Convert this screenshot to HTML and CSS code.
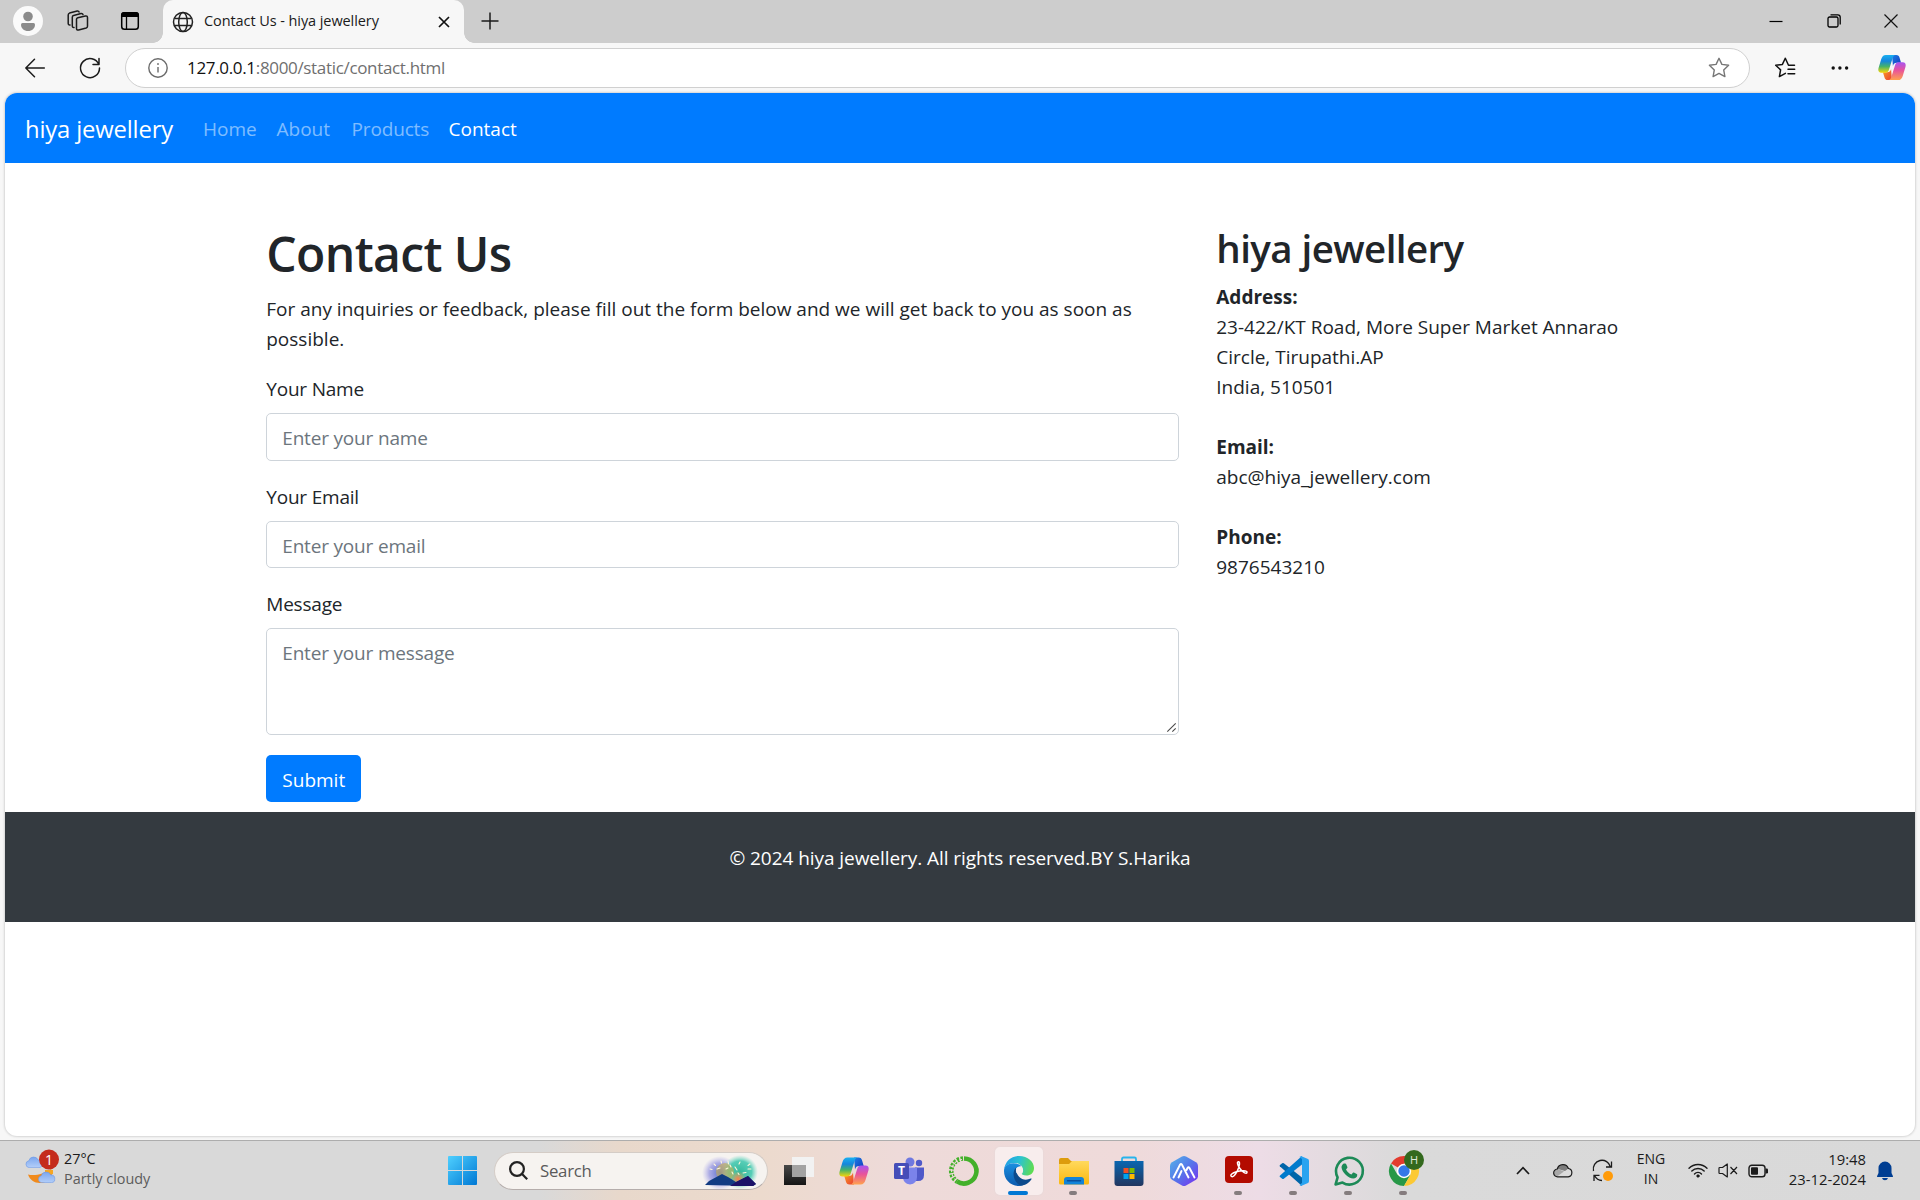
FILE: index.html
```html
<!DOCTYPE html>
<html lang="en">
<head>
<meta charset="utf-8">
<title>Contact Us - hiya jewellery</title>
<link rel="stylesheet" href="styles.css">
</head>
<body>
<svg class="defs" width="0" height="0" aria-hidden="true">
  <defs>
    <linearGradient id="cpA" x1="0" y1="0" x2="0" y2="1"><stop offset="0" stop-color="#19b0f0"/><stop offset=".35" stop-color="#1586dd"/><stop offset=".65" stop-color="#45b26a"/><stop offset="1" stop-color="#f5d60a"/></linearGradient>
    <linearGradient id="cpB" x1="0" y1="0" x2="0" y2="1"><stop offset="0" stop-color="#a855f0"/><stop offset=".45" stop-color="#e8539b"/><stop offset="1" stop-color="#ffa24d"/></linearGradient>
    <linearGradient id="cpC" x1="0" y1="0" x2="1" y2="1"><stop offset="0" stop-color="#1a7fe8"/><stop offset="1" stop-color="#1638b8"/></linearGradient>
    <linearGradient id="cpD" x1="0" y1="0" x2="1" y2="1"><stop offset="0" stop-color="#f9a227"/><stop offset="1" stop-color="#ea3d2f"/></linearGradient>
    <symbol id="copilot" viewBox="0 0 30 28">
      <path d="M15 .5h4.500c2.300 0 3 1 3.600 3l1.600 5.500h-4.500c-2.500 0-3.500 1-4.200 3.500z" fill="url(#cpC)"/>
      <path d="M15 27.500h-4.500c-2.300 0-3-1-3.600-3L5.300 19h4.500c2.500 0 3.500-1 4.200-3.500z" fill="url(#cpD)"/>
      <path d="M8.500.5H19c-2 0-2.800 1.500-3.400 3.500L12 15.500c-.8 2.800-1.700 4-4.200 4H3.500C.7 19.500-.2 17.500.6 14.500L3.500 5C4.400 2.200 5.800.5 8.500.5z" fill="url(#cpA)"/>
      <path d="M21.500 27.500H11c2 0 2.800-1.500 3.400-3.500L18 12.500c.8-2.800 1.700-4 4.200-4h4.300c2.800 0 3.700 2 2.900 5L26.500 23c-.9 2.800-2.300 4.500-5 4.500z" fill="url(#cpB)"/>
    </symbol>
    <linearGradient id="cloudG" x1="0" y1="0" x2="0" y2="1"><stop offset="0" stop-color="#7ba6ee"/><stop offset="1" stop-color="#b3cef9"/></linearGradient>
    <symbol id="cloudlet" viewBox="0 0 18 12"><path d="M4 11.600A3.500 3.500 0 0 1 3.800 4.700 5 5 0 0 1 13.200 4 3.800 3.800 0 0 1 14 11.600z" fill="url(#cloudG)" stroke="#6b98e6" stroke-width=".6"/></symbol>
  </defs>
</svg>

<header class="tabstrip">
  <div class="strip-tools">
    <svg width="30" height="30" viewBox="0 0 30 30"><circle cx="15" cy="15" r="15" fill="#fafafa"/><circle cx="15" cy="10.500" r="4.800" fill="#8b8b8b"/><path d="M8 18.500q0-1.500 1.500-1.500h11q1.500 0 1.500 1.500c0 4-3 6.500-7 6.500s-7-2.500-7-6.500z" fill="#8b8b8b"/></svg>
    <svg width="22" height="22" viewBox="0 0 22 22" fill="none" stroke="#1b1b1b" stroke-width="1.500" stroke-linejoin="round" stroke-linecap="round"><path d="M9.500 9.200q.2-1.200 1.300-1.500l7.500-1.700q2-.3 2.200 1.500v8.700q0 1.400-1.300 1.800l-7.600 2q-2 .4-2.100-1.500z"/><path d="M7 17.500q-1.600.2-1.700-1.500V7.200q0-1.500 1.300-1.800L14 3.600q1.600-.2 2 1"/><path d="M3 15q-1.700.2-1.800-1.500V5q0-1.500 1.300-1.900l7.700-2q1.400-.3 1.900 1"/></svg>
    <svg width="20" height="20" viewBox="0 0 20 20"><rect x="1.700" y="1.700" width="16.600" height="16.600" rx="2.800" fill="none" stroke="#000" stroke-width="1.500"/><path d="M1 6V4q0-3 3-3h12q3 0 3 3v2z"/><path d="M6.500 6v12" stroke="#000" stroke-width="1.300"/></svg>
  </div>
  <div class="tab">
    <svg width="22" height="22" viewBox="0 0 22 22" fill="none" stroke="#222" stroke-width="1.500"><circle cx="11" cy="11" r="9.500"/><ellipse cx="11" cy="11" rx="4.300" ry="9.500"/><path d="M2.500 7.500h17M2.500 14.500h17"/></svg>
    <span class="tab-title">Contact Us - hiya jewellery</span>
    <svg class="tab-close" width="12" height="12" viewBox="0 0 12 12" stroke="#111" stroke-width="1.700"><path d="M1 1l10 10M11 1L1 11"/></svg>
  </div>
  <svg class="newtab" width="18" height="18" viewBox="0 0 18 18" stroke="#1b1b1b" stroke-width="1.500"><path d="M9 .5v17M.5 9h17"/></svg>
  <div class="window-buttons">
    <svg width="14" height="14" viewBox="0 0 14 14" stroke="#000" stroke-width="1.200"><path d="M.5 7.500h13"/></svg>
    <svg width="14" height="14" viewBox="0 0 14 14" fill="none" stroke="#000" stroke-width="1.300"><rect x="1" y="3" width="10" height="10" rx="1.500"/><path d="M3.500 .8h7.300q2.400 0 2.400 2.400v7.300"/></svg>
    <svg width="14" height="14" viewBox="0 0 14 14" stroke="#111" stroke-width="1.200"><path d="M.5.5l13 13M13.500.5l-13 13"/></svg>
  </div>
</header>

<div class="toolbar">
  <svg class="back" width="20" height="20" viewBox="0 0 20 20" fill="none" stroke="#1b1b1b" stroke-width="1.500" stroke-linecap="round" stroke-linejoin="round"><path d="M19.300 10H.8M9.500 1.300L.8 10l8.700 8.700"/></svg>
  <svg class="reload" width="22" height="22" viewBox="0 0 22 22" fill="none" stroke="#1b1b1b" stroke-width="1.500" stroke-linecap="round" stroke-linejoin="round"><path d="M19.800 7.500A9.500 9.500 0 1 0 20.500 11M20 1.500v6h-6"/></svg>
  <div class="address">
    <svg width="20" height="20" viewBox="0 0 20 20" fill="none" stroke="#6b6b6b" stroke-width="1.400"><circle cx="10" cy="10" r="9.200"/><path d="M10 9v5.500"/><circle cx="10" cy="6" r=".6" fill="#6b6b6b" stroke-width=".8"/></svg>
    <span class="url"><b>127.0.0.1</b>:8000/static/contact.html</span>
    <svg class="star" width="22" height="21" viewBox="0 0 22 21" fill="none" stroke="#767676" stroke-width="1.400" stroke-linejoin="round"><path d="M11 1.300l2.900 6.100 6.700.9-4.900 4.600 1.200 6.700-5.900-3.200-5.900 3.200 1.200-6.700L1.400 8.300l6.700-.9z"/></svg>
  </div>
  <svg class="fav" width="22" height="21" viewBox="0 0 22 21" fill="none" stroke="#111" stroke-width="1.500" stroke-linejoin="round" stroke-linecap="round"><path d="M20.500 8.300h-6L11.300 1.300 8.400 7.400l-6.700.9 4.900 4.600-1.200 6.700 6-3.300M14 12.300h6.700M14 16.700h6.700"/></svg>
  <svg class="dots" width="18" height="6" viewBox="0 0 18 6" fill="#111"><circle cx="2.200" cy="3" r="1.700"/><circle cx="8.900" cy="3" r="1.700"/><circle cx="15.600" cy="3" r="1.700"/></svg>
  <svg class="cp" width="28" height="27"><use href="#copilot"/></svg>
</div>

<div class="viewport">
  <nav class="navbar">
    <a class="brand">hiya jewellery</a>
    <a class="nav-link home">Home</a>
    <a class="nav-link about">About</a>
    <a class="nav-link products">Products</a>
    <a class="nav-link active">Contact</a>
  </nav>
  <main class="container">
    <section class="col-form">
      <h1>Contact Us</h1>
      <p>For any inquiries or feedback, please fill out the form below and we will get back to you as soon as<br>possible.</p>
      <form>
        <div class="group"><label for="name">Your Name</label><input id="name" type="text" placeholder="Enter your name"></div>
        <div class="group"><label for="email">Your Email</label><input id="email" type="text" placeholder="Enter your email"></div>
        <div class="group"><label for="message">Message</label><textarea id="message" placeholder="Enter your message"></textarea>
          <svg class="grip" width="9" height="9" viewBox="0 0 9 9" stroke="#4a4a4a" stroke-width="1.100"><path d="M.3 8.700L8.700.3M5.300 8.700l3.400-3.400"/></svg></div>
        <button type="button" class="submit">Submit</button>
      </form>
    </section>
    <aside class="col-info">
      <h2>hiya jewellery</h2>
      <p><strong>Address:</strong><br>23-422/KT Road, More Super Market Annarao<br>Circle, Tirupathi.AP<br>India, 510501<br><br><strong>Email:</strong><br>abc@hiya_jewellery.com<br><br><strong>Phone:</strong><br>9876543210</p>
    </aside>
  </main>
  <footer class="footer"><p>© 2024 hiya jewellery. All rights reserved.BY S.Harika</p></footer>
</div>

<div class="taskbar">
  <div class="weather">
    <svg width="36" height="38" viewBox="0 0 36 38">
      <path d="M3 24.500c6 1.500 16 0 23-5.500 3 5-.5 14-11 14C9 33 5 30 3 24.500z" fill="#f08a1c"/><path d="M20 20h8v4h-8z" fill="#f6a623"/>
      <use href="#cloudlet" x="0" y="6" width="18" height="12"/><use href="#cloudlet" x="12.500" y="21" width="18" height="12"/>
      <circle cx="24" cy="9.500" r="10" fill="#c42b1c"/><text x="24" y="14.500" text-anchor="middle" font-size="14" fill="#fff">1</text>
    </svg>
    <div class="two"><span>27°C</span><span class="dim">Partly cloudy</span></div>
  </div>
  <div class="start">
    <svg width="29" height="29" viewBox="0 0 29 29"><defs><linearGradient id="win" x1="0" y1="0" x2="1" y2="1" ><stop offset="0" stop-color="#4fd0ff"/><stop offset="1" stop-color="#0078d4"/></linearGradient></defs><path d="M0 1q0-1 1-1h13v14H0zM15 0h13q1 0 1 1v13H15zM0 15h14v14H1q-1 0-1-1zM15 15h14v13q0 1-1 1H15z" fill="url(#win)"/></svg>
  </div>
  <div class="search">
    <svg width="19" height="19" viewBox="0 0 19 19" fill="none" stroke="#222" stroke-width="2.200"><circle cx="8" cy="8" r="6.900"/><path d="M12.800 12.800l5.400 5.400"/></svg>
    <span>Search</span>
    <svg class="fireworks" width="56" height="32" viewBox="0 0 56 32"><defs><radialGradient id="fwA"><stop offset="0" stop-color="#5b6fd0"/><stop offset=".6" stop-color="#9a9ae2" stop-opacity=".8"/><stop offset="1" stop-color="#b9b4ec" stop-opacity="0"/></radialGradient><radialGradient id="fwB"><stop offset="0" stop-color="#36b89c"/><stop offset=".65" stop-color="#45c9b0" stop-opacity=".9"/><stop offset="1" stop-color="#7fdcc8" stop-opacity="0"/></radialGradient><radialGradient id="fwC"><stop offset="0" stop-color="#ff7a50"/><stop offset="1" stop-color="#f0b040" stop-opacity="0"/></radialGradient></defs>
      <ellipse cx="18" cy="18" rx="18" ry="17" fill="url(#fwA)"/><ellipse cx="38" cy="17" rx="18" ry="17" fill="url(#fwB)"/><ellipse cx="23" cy="17" rx="9" ry="9" fill="#c9b04e" opacity=".6"/><circle cx="36" cy="24" r="8" fill="url(#fwC)"/>
      <g stroke="#fff7dc" stroke-width="1.100" stroke-linecap="round"><path d="M8 14l2 .5M12 9l1.500 1.500M19 6l.5 2M26 6l.5 3M38 7l-1 2M48 9l-2 1.500M49 14h-3M28 10l1 2M33 12l2 3M24 14l2-1M30 17l1 2M41 18l3-.5M15 14l3-1M36 18l1 1.500"/></g>
      <path d="M3 30l4-4 13-7 6 3 8 5 12-6 8 8-3 2z" fill="#123c82"/><path d="M28 31l6-4 12-6 8 8-3 2z" fill="#1d1268"/></svg>
  </div>
  <div class="apps">
    <div class="app"><svg width="30" height="30" viewBox="0 0 30 30"><defs><linearGradient id="tv" x1="0" y1="0" x2="0" y2="1"><stop offset="0" stop-color="#484848"/><stop offset="1" stop-color="#151515"/></linearGradient></defs><path d="M0 9h22v20H0z" fill="url(#tv)"/><path d="M8 1h22v20H8z" fill="#f2f2f2"/><path d="M8 9h14v12H8z" fill="#a3a3a3"/></svg></div>
    <div class="app"><svg width="30" height="28"><use href="#copilot"/></svg></div>
    <div class="app"><svg width="30" height="30" viewBox="0 0 30 30"><circle cx="16" cy="6" r="4.500" fill="#6f78e0"/><circle cx="25" cy="7" r="3.200" fill="#5059c9"/><path d="M21 11.500h9V19q0 6-6 6h-3z" fill="#5059c9"/><path d="M9 11.500h14V21q0 6.500-7 7.500-7-1-7-7.500z" fill="#7b83eb"/><rect y="7" width="15" height="16" rx="1.500" fill="#454db8"/><text x="7.500" y="19.300" text-anchor="middle" font-size="12" font-weight="700" fill="#fff">T</text></svg></div>
    <div class="app"><svg width="30" height="30" viewBox="0 0 30 30" fill="none" stroke="#43b02a"><path d="M15 2.500a12.500 12.500 0 1 1-7 22.900" stroke-width="4.600"/><path d="M14 2.500A12.500 12.500 0 0 0 8 25.500" stroke-width="4.600" stroke-dasharray="2.400 1.300"/><path d="M13 3.500A11.500 11.500 0 0 0 7 24" stroke="#f0dcdc" stroke-width="1.100" stroke-dasharray="3 2"/></svg></div>
    <div class="app current"><svg width="30" height="30" viewBox="0 0 30 30"><defs><linearGradient id="eA" x1="0" y1=".3" x2="1" y2=".5"><stop offset="0" stop-color="#1e9be8"/><stop offset=".5" stop-color="#2cc3d0"/><stop offset="1" stop-color="#5fdc50"/></linearGradient><linearGradient id="eB" x1="0" y1="0" x2="0" y2="1"><stop offset="0" stop-color="#1b8fe0"/><stop offset="1" stop-color="#0b5aae"/></linearGradient></defs>
      <path d="M0 14C1 5.500 7 0 15 0c9 0 15 6 15 12 0 5-3.500 7.500-7.500 7.500-3.500 0-5-1.200-5-2.200 0-.8 1.300-1.600 1.300-4C18.800 10 15 7 10.500 7 5 7 1 10 0 14z" fill="url(#eA)"/><path d="M0 15C0 10.500 4 7.300 9.500 7.300c3.500 0 6.200 1.200 8 3-3.500-.8-6.500 2-6.500 6.200 0 6 4.500 10.500 12 10C20.500 28.800 18 30 15 30 6.500 30 0 23.500 0 15z" fill="url(#eB)"/><path d="M12 11.800C8 15 8.500 25 16 29.500c5 .3 9-2.500 11.500-6.300.3-.7-.2-1-.8-.7-6 3-14.500.5-14.700-10.700z" fill="#0c4a8c"/><circle cx="15.500" cy="14.700" r="3.600" fill="#f7ecec"/></svg></div>
    <div class="app run"><svg width="30" height="30" viewBox="0 0 30 30"><defs><linearGradient id="fold" x1="0" y1="0" x2="0" y2="1"><stop offset="0" stop-color="#ffd95e"/><stop offset="1" stop-color="#fbb80e"/></linearGradient></defs><path d="M0 4q0-2 2-2h7l3 3h16q2 0 2 2v4H0z" fill="#dd9c0d"/><path d="M0 8h10l3-3h17v22q0 1.500-1.500 1.500h-27Q0 28.500 0 27z" fill="url(#fold)"/><path d="M5 28.500V24q0-3 3-3h14q3 0 3 3v4.500z" fill="#1283d8"/><path d="M8.500 24.700h13" stroke="#0b4f9b" stroke-width="1.400" stroke-linecap="round"/></svg></div>
    <div class="app"><svg width="30" height="30" viewBox="0 0 30 30"><defs><linearGradient id="store" x1="0" y1="0" x2="0" y2="1"><stop offset="0" stop-color="#0a66b0"/><stop offset="1" stop-color="#22365f"/></linearGradient></defs><path d="M8 6V3q0-1.500 1.500-1.500h11Q22 1.500 22 3v3" fill="none" stroke="#28b4ec" stroke-width="1.800"/><path d="M.5 5h29v22q0 3-3 3h-23q-3 0-3-3z" fill="url(#store)"/><path d="M9.500 12h5v5h-5z" fill="#f25022"/><path d="M15.500 12h5v5h-5z" fill="#7fba00"/><path d="M9.500 18h5v5h-5z" fill="#00a4ef"/><path d="M15.500 18h5v5h-5z" fill="#ffb900"/></svg></div>
    <div class="app"><svg width="30" height="30" viewBox="0 0 30 30"><defs><linearGradient id="hex" x1="0" y1="0" x2="1" y2="1"><stop offset="0" stop-color="#55b4e8"/><stop offset=".5" stop-color="#5576ea"/><stop offset="1" stop-color="#7a2cf0"/></linearGradient></defs><path d="M13 .5q2-1 4 0l10 5.800q2 1.200 2 3.400v10.600q0 2.200-2 3.400L17 29.500q-2 1-4 0L3 23.700q-2-1.200-2-3.400V9.700q0-2.200 2-3.400z" fill="url(#hex)"/><path d="M4.500 21.500L11 8.700q1-1.700 2 0l6.500 12.800M12.500 15l-3 6.500M17.500 14l1-2q1-1.500 2 0l5 9.500" fill="none" stroke="#fff" stroke-width="1.900" stroke-linecap="round" stroke-linejoin="round"/></svg></div>
    <div class="app run"><svg width="30" height="30" viewBox="0 0 30 30"><rect x="1" y="0" width="28" height="27" rx="4" fill="#b30b00"/><path d="M7.500 20.500c-2-1.500 1-3.500 5-4.700 5-1.600 10.500-1.300 10.500.5 0 2.500-5-.3-7.500-4.300-2-3.300-2.700-6-1.200-6.300 2-.3 1.300 4.300-.8 8.800-2 4.300-4.500 7-6 6z" fill="none" stroke="#fff" stroke-width="1.500"/></svg></div>
    <div class="app run"><svg width="30" height="30" viewBox="0 0 30 30"><path d="M1 9l2.200-1.800q.8-.5 1.600.1L23 21.500V30L.8 10.300Q.3 9.600 1 9z" fill="#0065a9"/><path d="M1 21l2.200 1.800q.8.500 1.600-.1L23 8.500V0L.8 19.700q-.5.700.2 1.300z" fill="#007acc"/><path d="M22 30q-1-.3-1.500-1L23 27V3l-2.500-2q.7-.9 2-.8L29 3q1 .5 1 2v20q0 1.500-1 2z" fill="#29a3f0"/></svg></div>
    <div class="app run"><svg width="30" height="30" viewBox="0 0 30 30"><path d="M1.600 28.400l2-7A13.400 13.400 0 1 1 8.500 26.600z" fill="none" stroke="#1d8a57" stroke-width="2.600" stroke-linejoin="round"/><path d="M9.800 7.500h1.400q.7 0 1 .7l1.200 2.900q.2.500-.2 1l-1.200 1.500c1.400 2.500 3 4 5.400 5l1.500-1.800q.4-.5 1-.2l2.800 1.300q.6.300.6.900c0 2.500-2 3.700-4 3.700-5 0-11.300-6-11.800-11.200 0-1.700 1.300-3.300 2.300-3.800z" fill="#1d8a57"/></svg></div>
    <div class="app run"><svg width="30" height="30" viewBox="0 0 30 30"><path d="M15 15L2 7.500A15 15 0 0 1 28 7.500H15z" fill="#e33b2e"/><path d="M15 15l6.500 3.700L15 30A15 15 0 0 1 2 7.500l6.500 11.200z" fill="#279847"/><path d="M15 7.500h13A15 15 0 0 1 15 30l6.500-11.300z" fill="#fcc934"/><circle cx="15" cy="15" r="7.200" fill="#fff"/><circle cx="15" cy="15" r="5.700" fill="#3478e8"/></svg><span class="badge">H</span></div>
  </div>
  <div class="tray">
    <svg class="caret" width="14" height="9" viewBox="0 0 14 9" fill="none" stroke="#1b1b1b" stroke-width="1.700"><path d="M1 8l6-6.300L13 8"/></svg>
    <svg class="onedrive" width="20" height="15" viewBox="0 0 20 15"><path d="M4.800 13.800A3.900 3.900 0 0 1 4.300 6 5.800 5.800 0 0 1 15.400 5.500 4.200 4.200 0 0 1 15.200 13.800z" fill="#dcdcdc"/><path d="M4.300 6A5.800 5.800 0 0 1 15.400 5.500L12 8 5 6z" fill="#7d7d7d"/><path d="M1 10q0-4 4-4l6 2.500-7 5q-3-.5-3-3.500z" fill="#a8a8a8"/><path d="M4.800 13.800A3.900 3.900 0 0 1 4.300 6 5.800 5.800 0 0 1 15.400 5.500 4.200 4.200 0 0 1 15.200 13.800z" fill="none" stroke="#1b1b1b" stroke-width="1.200"/></svg>
    <svg class="sync" width="22" height="22" viewBox="0 0 22 22" fill="none" stroke="#1b1b1b" stroke-width="1.300"><path d="M1.500 11A8.700 8.700 0 0 1 18.500 7M19.500 1.500V7H14M10 20.500Q5 20.500 2.500 15.500M2 21v-5.700h5.500"/><circle cx="16" cy="16" r="5" fill="#ff9b0a" stroke="none"/></svg>
    <div class="lang"><span>ENG</span><span>IN</span></div>
    <svg class="wifi" width="20" height="15" viewBox="0 0 20 15" fill="none" stroke="#1b1b1b" stroke-width="1.400" stroke-linecap="round"><path d="M1 5.300a12.700 12.700 0 0 1 18 0M3.800 8.100a8.700 8.700 0 0 1 12.400 0M6.500 10.900a5 5 0 0 1 7 0"/><circle cx="10" cy="13" r="1.300" fill="#1b1b1b" stroke-width=".6"/></svg>
    <svg class="mute" width="20" height="15" viewBox="0 0 20 15" fill="none" stroke="#1b1b1b" stroke-width="1.200" stroke-linejoin="round"><path d="M1 5.200q0-.7.700-.7H4.500L9.300 1v13L4.500 10.500H1.700q-.7 0-.7-.7zM12.500 4l6.500 7M19 4l-6.500 7"/></svg>
    <svg class="battery" width="21" height="14" viewBox="0 0 21 14"><rect x="1" y="1.200" width="16" height="11.600" rx="2.800" fill="none" stroke="#1b1b1b" stroke-width="1.400"/><rect x="3" y="3.300" width="7" height="7.400" rx="1" fill="#1b1b1b"/><path d="M17.500 4.500h1.200q1.300 0 1.300 1.300v2.400q0 1.300-1.300 1.300h-1.200z" fill="#1b1b1b"/></svg>
    <div class="clock"><span>19:48</span><span>23-12-2024</span></div>
    <svg class="bell" width="18" height="20" viewBox="0 0 18 20" fill="#003e92"><path d="M9 .5a6.500 6.500 0 0 1 6.500 6.500v5l1.500 3.200q.3.800-.6.800H1.600q-.9 0-.6-.8L2.500 12V7A6.500 6.500 0 0 1 9 .5zM6 17h6q-.6 2.300-3 2.300T6 17z"/></svg>
  </div>
</div>
</body>
</html>
```
FILE: styles.css
```css
* { box-sizing: border-box; }
body { margin: 0; width: 1920px; height: 1200px; overflow: hidden; background: #f7f7f7; display: flex; flex-direction: column; font-family: "Open Sans", "Noto Sans", sans-serif; color: #212529; }
svg { display: block; flex: none; overflow: visible; }
.defs { position: absolute; }

.tabstrip { height: 43px; flex: none; background: #cdcdcd; display: flex; align-items: center; }
.strip-tools { width: 163px; display: flex; align-items: center; padding-left: 13px; padding-bottom: 1px; }
.strip-tools svg + svg { margin-left: 24px; }
.strip-tools svg:last-child { margin-left: 31px; }
.tab { position: relative; width: 301px; height: 43px; background: #f7f7f7; border-radius: 10px 10px 0 0; display: flex; align-items: center; padding: 0 14px 0 9px; }
.tab::before, .tab::after { content: ""; position: absolute; bottom: 0; width: 10px; height: 10px; }
.tab::before { left: -10px; background: radial-gradient(circle at 0 0, #cdcdcd 9.5px, #f7f7f7 10px); }
.tab::after { right: -10px; background: radial-gradient(circle at 100% 0, #cdcdcd 9.5px, #f7f7f7 10px); }
.tab-title { margin-left: 10px; padding-bottom: 2px; font-size: 14.500px; letter-spacing: -.08px; color: #1b1b1b; white-space: nowrap; }
.tab-close { margin-left: auto; }
.newtab { margin-left: 17px; margin-bottom: 1px; }
.window-buttons { margin-left: auto; display: flex; gap: 43.500px; padding-right: 22px; padding-bottom: 1px; }

.toolbar { height: 50px; flex: none; display: flex; align-items: center; padding-left: 25px; padding-bottom: 1px; }
.reload { margin-left: 34px; }
.address { width: 1625px; height: 40px; margin-left: 24px; background: #fff; border: 1px solid #d0d0d0; border-radius: 20px; display: flex; align-items: center; padding: 0 19px 0 22px; }
.url { margin-left: 19px; font-size: 17px; letter-spacing: -.33px; color: #6f6f6f; }
.url b { font-weight: 400; color: #111; }
.star { margin-left: auto; }
.fav { margin-left: 24px; }
.dots { margin-left: 35px; }
.cp { margin-left: 29px; }

.viewport { width: 1910px; height: 1043px; flex: none; margin-left: 5px; background: #fff; border-radius: 12px; overflow: hidden; box-shadow: 0 0 2px 1px #d6d6d6; }
.navbar { height: 70px; background: #007bff; display: flex; align-items: center; padding: 1px 20px 0; font-size: 19px; white-space: nowrap; }
.brand { width: 148px; margin-right: 30px; font-size: 23.800px; letter-spacing: -.15px; color: #fff; }
.nav-link { color: rgba(255,255,255,.5); }
.home { width: 73.500px; }
.about { width: 75px; }
.products { width: 97px; letter-spacing: -.15px; }
.nav-link.active { color: #fff; }
.container { width: 1425px; height: 649px; margin: 0 auto; padding-top: 61px; display: flex; font-size: 19px; line-height: 30px; white-space: nowrap; }
.col-form { width: 950px; padding: 0 18.750px; }
.col-info { width: 475px; padding: 0 18.750px; }
h1, h2 { margin: 0 0 10px; font-weight: 600; }
h1 { font-size: 48px; line-height: 60px; letter-spacing: -.6px; }
h2 { font-size: 38.500px; line-height: 48px; letter-spacing: -.58px; }
p { margin: 0 0 20px; }
.group { position: relative; margin-bottom: 21px; }
.group:last-of-type { margin-bottom: 20px; }
label { display: block; margin-bottom: 9px; letter-spacing: -.2px; }
input, textarea { display: block; width: 100%; height: 47.500px; border: 1px solid #ced4da; border-radius: 5px; padding: 9px 15px 6px; font: inherit; letter-spacing: -.18px; background: #fff; }
textarea { height: 107px; resize: none; }
.grip { position: absolute; right: 3px; bottom: 3px; }
::placeholder { color: #6c757d; opacity: 1; }
.submit { width: 95px; height: 47px; border: 0; border-radius: 5px; background: #007bff; color: #fff; font: inherit; padding: 2px 0 0; }
.footer { height: 110px; padding: 31px 30px 0; background: #343a40; color: #fff; text-align: center; font-size: 19px; letter-spacing: -.06px; line-height: 30px; }

.taskbar { height: 60px; flex: none; margin-top: 4px; border-top: 1px solid #adadad; display: flex; align-items: center; background: linear-gradient(90deg, #d9d9d9 0, #d9d9d9 540px, #e8d8cb 620px, #ecdacd 760px, #eedad9 900px, #efdada 1130px, #eddce6 1260px, #dadada 1400px, #d9d9d9 100%); color: #1b1b1b; font-size: 14.800px; white-space: nowrap; }
.weather { width: 448px; display: flex; padding-left: 25px; }
.two, .lang, .clock { display: flex; flex-direction: column; line-height: 20px; padding-bottom: 3px; }
.two { margin: -1px 0 0 3px; font-size: 14.400px; }
.dim { color: #5c5c5c; }
.search { width: 274px; height: 38px; margin-left: 17px; border-radius: 19px; background: #f6f3f0; border: 1px solid #d4ccc6; border-bottom-color: #b5adab; display: flex; align-items: center; padding: 0 9px 0 14px; font-size: 16.800px; letter-spacing: -.25px; color: #5a5a5a; }
.search > span { margin-left: 12px; padding-bottom: 1px; }
.fireworks { margin-left: auto; }
.apps { display: flex; padding-left: 3px; }
.app { position: relative; width: 55px; height: 48px; display: flex; align-items: center; justify-content: center; }
.app::after { content: ""; position: absolute; bottom: 0; left: 23px; width: 8px; height: 4px; border-radius: 2px; }
.run::after { background: #857c7e; }
.current::before { content: ""; position: absolute; inset: 0 3.500px; border-radius: 5px; background: #f8eded; box-shadow: 0 0 1px 1px #ead9d9; }
.current::after { left: 17px; width: 20px; background: #0078d4; }
.current svg { position: relative; }
.badge { position: absolute; left: 28px; top: 3px; width: 20px; height: 20px; border-radius: 50%; background: #33691e; color: #e0e8dc; font-size: 11px; line-height: 20px; text-align: center; }
.tray { display: flex; align-items: center; padding-left: 85px; }
.onedrive { margin-left: 23px; }
.sync { margin-left: 19px; }
.lang { width: 50px; margin-left: 12px; align-items: center; font-size: 14px; }
.wifi { margin-left: 12px; }
.mute { margin-left: 10px; }
.battery { margin-left: 10px; }
.clock { width: 97px; align-items: flex-end; }
.bell { margin-left: 10px; }
```
